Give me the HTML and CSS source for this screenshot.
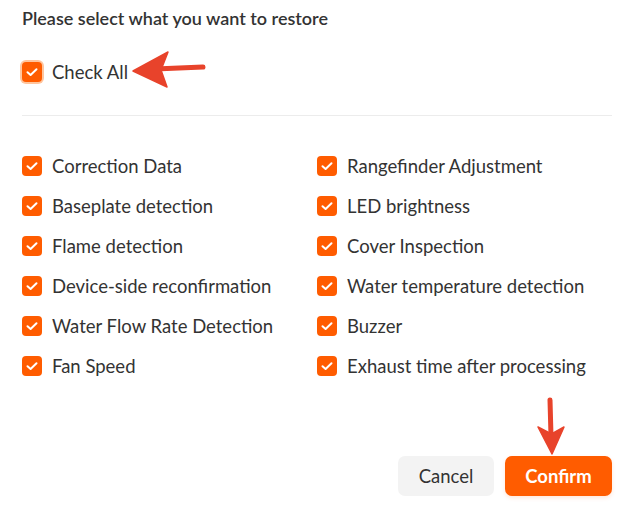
FILE: index.html
```html
<!DOCTYPE html>
<html>
<head>
<meta charset="utf-8">
<link rel="stylesheet" href="styles.css">
</head>
<body>
<div class="dialog">
  <div class="title">Please select what you want to restore</div>
  <div class="check-all">
    <label class="item">
      <span class="box halo"><svg viewBox="0 0 20 20"><path d="M5.5 10.2 L8.6 13 L14.5 7.2"/></svg></span>
      <span class="label">Check All</span>
    </label>
  </div>
  <div class="divider"></div>
  <div class="grid">
    <label class="item"><span class="box"><svg viewBox="0 0 20 20"><path d="M5.5 10.2 L8.6 13 L14.5 7.2"/></svg></span><span class="label">Correction Data</span></label>
    <label class="item"><span class="box"><svg viewBox="0 0 20 20"><path d="M5.5 10.2 L8.6 13 L14.5 7.2"/></svg></span><span class="label">Rangefinder Adjustment</span></label>
    <label class="item"><span class="box"><svg viewBox="0 0 20 20"><path d="M5.5 10.2 L8.6 13 L14.5 7.2"/></svg></span><span class="label">Baseplate detection</span></label>
    <label class="item"><span class="box"><svg viewBox="0 0 20 20"><path d="M5.5 10.2 L8.6 13 L14.5 7.2"/></svg></span><span class="label">LED brightness</span></label>
    <label class="item"><span class="box"><svg viewBox="0 0 20 20"><path d="M5.5 10.2 L8.6 13 L14.5 7.2"/></svg></span><span class="label">Flame detection</span></label>
    <label class="item"><span class="box"><svg viewBox="0 0 20 20"><path d="M5.5 10.2 L8.6 13 L14.5 7.2"/></svg></span><span class="label">Cover Inspection</span></label>
    <label class="item"><span class="box"><svg viewBox="0 0 20 20"><path d="M5.5 10.2 L8.6 13 L14.5 7.2"/></svg></span><span class="label">Device-side reconfirmation</span></label>
    <label class="item"><span class="box"><svg viewBox="0 0 20 20"><path d="M5.5 10.2 L8.6 13 L14.5 7.2"/></svg></span><span class="label">Water temperature detection</span></label>
    <label class="item"><span class="box"><svg viewBox="0 0 20 20"><path d="M5.5 10.2 L8.6 13 L14.5 7.2"/></svg></span><span class="label">Water Flow Rate Detection</span></label>
    <label class="item"><span class="box"><svg viewBox="0 0 20 20"><path d="M5.5 10.2 L8.6 13 L14.5 7.2"/></svg></span><span class="label">Buzzer</span></label>
    <label class="item"><span class="box"><svg viewBox="0 0 20 20"><path d="M5.5 10.2 L8.6 13 L14.5 7.2"/></svg></span><span class="label">Fan Speed</span></label>
    <label class="item"><span class="box"><svg viewBox="0 0 20 20"><path d="M5.5 10.2 L8.6 13 L14.5 7.2"/></svg></span><span class="label">Exhaust time after processing</span></label>
  </div>
  <div class="footer">
    <button class="btn btn-cancel">Cancel</button>
    <button class="btn btn-confirm">Confirm</button>
  </div>
  <svg class="arrow arrow-left" width="90" height="50" viewBox="0 0 90 50">
    <path class="shaft" d="M30 22 L78 20"/>
    <path class="head" d="M8 24 L43 5 L36 23 L42 40 Z"/>
  </svg>
  <svg class="arrow arrow-down" width="40" height="70" viewBox="0 0 40 70">
    <path class="shaft" d="M18 4 L19 40"/>
    <path class="head" d="M20 58 L6 31 L19.5 38 L32 31 Z"/>
  </svg>
</div>
</body>
</html>
```
FILE: styles.css
```css
html, body {
  margin: 0;
  padding: 0;
  background: #ffffff;
}
body {
  font-family: "Lato", "Open Sans", sans-serif;
  color: #333333;
}
.dialog {
  position: relative;
  width: 632px;
  height: 514px;
  box-sizing: border-box;
  padding: 7px 20px 0 22px;
}
.title {
  font-size: 18px;
  font-weight: 600;
  line-height: 22px;
  color: #333;
}
.check-all {
  margin-top: 23px;
  height: 40px;
  display: flex;
  align-items: center;
}
.divider {
  margin-top: 23px;
  height: 1px;
  background: #ececec;
}
.grid {
  margin-top: 30px;
  display: grid;
  grid-template-columns: 295px 1fr;
  grid-auto-rows: 40px;
}
.item {
  display: flex;
  align-items: center;
  gap: 10px;
}
.box {
  width: 20px;
  height: 20px;
  border-radius: 4px;
  background: #ff5c00;
  display: flex;
  align-items: center;
  justify-content: center;
  flex: none;
}
.box svg {
  width: 20px;
  height: 20px;
}
.box path {
  fill: none;
  stroke: #fff;
  stroke-width: 2;
  stroke-linecap: round;
  stroke-linejoin: round;
}
.halo {
  box-shadow: 0 0 0 2px #ffc59e;
}
.label {
  font-size: 18.5px;
  line-height: 24px;
  color: #333;
}
.footer {
  margin-top: 70px;
  display: flex;
  justify-content: flex-end;
  gap: 11px;
}
.btn {
  height: 40px;
  border: none;
  border-radius: 7px;
  font-family: inherit;
  font-size: 18.5px;
  padding: 0;
}
.btn-cancel {
  width: 96px;
  background: #f3f3f3;
  color: #333;
}
.btn-confirm {
  width: 107px;
  background: #ff5c00;
  color: #fff;
  font-weight: 700;
  box-shadow: 0 2px 4px rgba(255, 92, 0, 0.15);
}
.arrow {
  position: absolute;
  overflow: visible;
}
.arrow .shaft {
  fill: none;
  stroke: #e8432b;
  stroke-width: 5;
  stroke-linecap: round;
}
.arrow .head {
  fill: #e8432b;
  stroke: #e8432b;
  stroke-width: 1.5;
  stroke-linejoin: round;
}
.arrow-left {
  left: 125px;
  top: 47px;
}
.arrow-down {
  left: 532px;
  top: 396px;
}
```
